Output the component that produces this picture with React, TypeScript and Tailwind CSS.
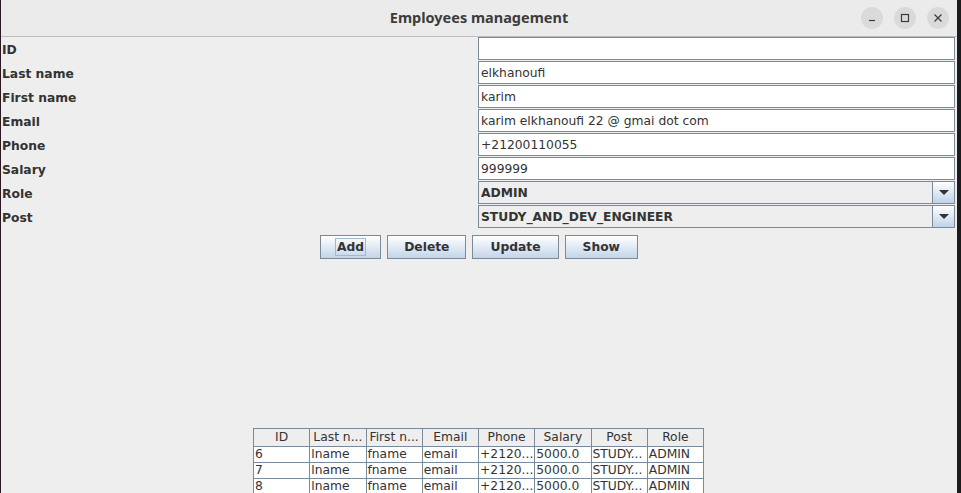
import React from 'react'

const fields = [
  { label: 'ID', value: '' },
  { label: 'Last name', value: 'elkhanoufi' },
  { label: 'First name', value: 'karim' },
  { label: 'Email', value: 'karim elkhanoufi 22 @ gmai dot com' },
  { label: 'Phone', value: '+21200110055' },
  { label: 'Salary', value: '999999' },
]

const combos = [
  { label: 'Role', value: 'ADMIN' },
  { label: 'Post', value: 'STUDY_AND_DEV_ENGINEER' },
]

const buttons = [
  { text: 'Add', pad: 'px-[14px]' },
  { text: 'Delete', pad: 'px-[14px]' },
  { text: 'Update', pad: 'px-[15px]' },
  { text: 'Show', pad: 'px-[15px]' },
]

const columns = ['ID', 'Last n...', 'First n...', 'Email', 'Phone', 'Salary', 'Post', 'Role']

const rows = ['6', '7', '8'].map(id => [id, 'lname', 'fname', 'email', '+2120...', '5000.0', 'STUDY...', 'ADMIN'])

const dialog = { fontFamily: '"DejaVu Sans", sans-serif' }

function WindowButton({ children }: { children: React.ReactNode }) {
  return (
    <div className="w-[22px] h-[22px] rounded-full bg-[#dadada] flex items-center justify-center">
      <svg width="10" height="10" viewBox="0 0 10 10" fill="none" stroke="#3c3c3c" strokeWidth="1.2">
        {children}
      </svg>
    </div>
  )
}

function ArrowButton() {
  return (
    <div className="w-[22px] h-full border-l border-[#7a8a99] bg-linear-to-b from-white to-[#c0d3e8] flex items-center justify-center">
      <svg width="10" height="5" viewBox="0 0 10 5">
        <path d="M0 0 L10 0 L5 5 Z" fill="#333333" />
      </svg>
    </div>
  )
}

export default function App() {
  return (
    <div className="flex w-[961px] h-[493px] overflow-hidden bg-[#1c1c1c]">
      <div className="w-[957px] h-full flex flex-col bg-[#eeeeee] border-l border-[#2a1826]">
        {/* title bar */}
        <div className="h-[37px] shrink-0 flex items-center bg-[#ebebeb] border-b border-[#bdbdbd] relative">
          <div
            className="flex-1 text-center font-bold text-[14.5px] text-[#3c3c3c]"
            style={{ fontFamily: '"Noto Sans", sans-serif' }}
          >
            Employees management
          </div>
          <div className="absolute right-[8px] top-[7px] flex gap-[11px]">
            <WindowButton>
              <path d="M2 7.5 H8" />
            </WindowButton>
            <WindowButton>
              <rect x="1.5" y="1.5" width="7" height="7" />
            </WindowButton>
            <WindowButton>
              <path d="M1.5 1.5 L8.5 8.5 M8.5 1.5 L1.5 8.5" />
            </WindowButton>
          </div>
        </div>

        {/* form */}
        <div className="flex flex-col text-[12.3px] text-[#333333]" style={dialog}>
          {fields.map(f => (
            <div key={f.label} className="flex h-6">
              <div className="w-[477px] pl-[1px] pt-[3px] h-[23px] flex items-center font-bold">{f.label}</div>
              <div className="flex-1 mr-[2px] h-[23px] border border-[#7a8a99] bg-white flex items-center px-[2px] pt-[1px]">
                {f.value}
              </div>
            </div>
          ))}
          {combos.map(c => (
            <div key={c.label} className="flex h-6">
              <div className="w-[477px] pl-[1px] pt-[3px] h-[23px] flex items-center font-bold">{c.label}</div>
              <div className="flex-1 mr-[2px] h-[23px] border border-[#7a8a99] bg-[#eeeeee] flex items-center">
                <div className="flex-1 px-[2px] pt-[1px] font-bold">{c.value}</div>
                <ArrowButton />
              </div>
            </div>
          ))}
        </div>

        {/* buttons */}
        <div className="flex justify-center gap-[6px] mt-[6px] text-[12.3px] font-bold text-[#333333]" style={dialog}>
          {buttons.map(b => (
            <div
              key={b.text}
              className={`h-6 ${b.pad} border border-[#7a8a99] bg-linear-to-b from-white to-[#c3d5e9] flex items-center`}
            >
              <span className={b.text === 'Add' ? 'border border-[#a3b8cc] px-[1px] leading-[16px]' : 'px-[2px] leading-[16px]'}>
                {b.text}
              </span>
            </div>
          ))}
        </div>

        {/* table */}
        <div className="mt-[169px] ml-[252px] w-[451px] text-[12.3px] text-[#333333]" style={dialog}>
          <div className="grid grid-cols-8 border-l border-t border-[#7a8a99] bg-[#eeeeee]">
            {columns.map(c => (
              <div key={c} className="h-[18px] border-r border-b border-[#7a8a99] flex items-center justify-center whitespace-nowrap overflow-hidden">
                {c}
              </div>
            ))}
          </div>
          {rows.map(r => (
            <div key={r[0]} className="grid grid-cols-8 border-l border-[#7a8a99] bg-white">
              {r.map((cell, i) => (
                <div key={i} className="h-4 border-r border-b border-[#7a8a99] flex items-center pl-[1px] whitespace-nowrap overflow-hidden leading-none">
                  {cell}
                </div>
              ))}
            </div>
          ))}
        </div>
      </div>
      <div className="flex-1" />
    </div>
  )
}
